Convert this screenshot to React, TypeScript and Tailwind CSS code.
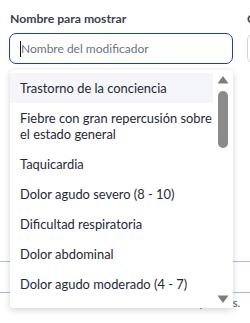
import React from "react"

const opciones = [
  "Trastorno de la conciencia",
  "Fiebre con gran repercusión sobre\nel estado general",
  "Taquicardia",
  "Dolor agudo severo (8 - 10)",
  "Dificultad respiratoria",
  "Dolor abdominal",
  "Dolor agudo moderado (4 - 7)",
  "Vómitos persistentes",
]

export default function App() {
  return (
    <div
      className="relative w-[250px] h-[323px] overflow-hidden bg-white text-[#1f2937]"
      style={{ fontFamily: 'Lato, "Noto Sans", sans-serif' }}
    >
      {/* Formulario de fondo */}
      <div className="flex gap-[14px] pl-[9px] pt-[10px]">
        <div className="w-[224px] shrink-0">
          <label className="block pl-[1px] text-[12.2px] font-bold leading-[17px] text-[#3b4150]">
            Nombre para mostrar
          </label>
          <div className="mt-[6px] flex h-[31px] items-center rounded-[7px] border border-[#1e40af] px-[10px]">
            <span className="h-[16px] w-[1px] bg-[#111]" />
            <span className="text-[12px] text-[#6b7280]">Nombre del modificador</span>
          </div>
        </div>
        <div className="w-[200px] shrink-0">
          <label className="block text-[12.2px] font-bold leading-[17px] text-[#3b4150]">
            Cantidad
          </label>
          <div className="mt-[6px] h-[31px] rounded-[7px] border border-[#d1d5db]" />
        </div>
      </div>
      <div className="mt-[197px] border-t border-[#a9bde3]" />
      <div className="mt-[30px] border-t border-[#a9bde3]" />
      <p className="mt-[3px] whitespace-nowrap pr-[10px] text-right text-[11px] leading-[14px] text-[#4b5563]">
        Se mostrará a los clientes en los pedidos.
      </p>

      {/* Lista desplegable */}
      <div className="absolute left-[10px] top-[70px] h-[238px] w-[223px] rounded-[4px] bg-white shadow-[0_2px_7px_rgba(0,0,0,0.18)]">
        <ul className="h-[230px] overflow-hidden pt-[3px]">
          {opciones.map((o, i) => (
            <li
              key={o}
              className={`w-[203px] whitespace-pre pl-[10px] py-[7px] text-[12.9px] leading-[16px] text-[#1f2937] ${
                i === 0 ? "bg-[#f4f6f9]" : ""
              }`}
            >
              {o}
            </li>
          ))}
        </ul>
        <div className="absolute right-[4px] top-[5px] bottom-[4px] flex w-[12px] flex-col items-center">
          <svg width="12" height="9" viewBox="0 0 12 9">
            <path d="M6 1 L11.5 8.5 L0.5 8.5 Z" fill="#7c7c7c" />
          </svg>
          <div className="mt-[7px] h-[57px] w-[10px] rounded-full bg-[#8b8b8b]" />
          <div className="flex-1" />
          <svg width="12" height="9" viewBox="0 0 12 9">
            <path d="M0.5 0.5 L11.5 0.5 L6 8 Z" fill="#7c7c7c" />
          </svg>
        </div>
      </div>
    </div>
  )
}
